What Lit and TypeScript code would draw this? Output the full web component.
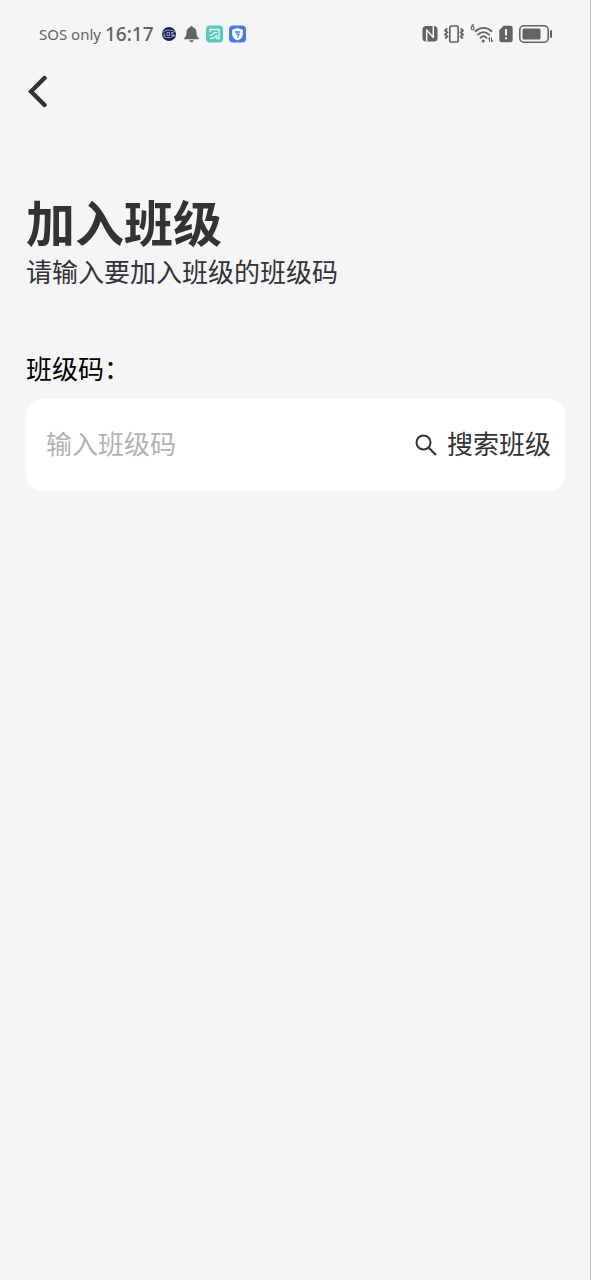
import { LitElement, html, css } from "lit";
import { customElement, state } from "lit/decorators.js";

@customElement("status-bar")
class StatusBar extends LitElement {
  static styles = css`
    :host {
      display: block;
    }
    .bar {
      display: flex;
      justify-content: space-between;
      align-items: center;
      height: 67px;
      padding: 0 38px 0 39px;
      box-sizing: border-box;
      color: #636365;
    }
    .side {
      display: flex;
      align-items: center;
      gap: 6px;
    }
    .carrier {
      font: 15px/20px "Noto Sans", sans-serif;
      margin-right: -2px;
    }
    .time {
      font: 500 19px/24px "Noto Sans", sans-serif;
      margin-right: 1px;
    }
    svg {
      display: block;
      flex: none;
    }
  `;

  render() {
    return html`
      <div class="bar">
        <div class="side">
          <span class="carrier">SOS only</span>
          <span class="time">16:17</span>
          <svg width="16" height="18" viewBox="0 0 16 18">
            <circle cx="8" cy="9" r="7" fill="#15245a" />
            <path d="M1.500 7.500C4 4.500 11 4.500 14.500 7M2 11C5 13.500 11 13 14.500 10" fill="none" stroke="#98a2bd" stroke-width="1" />
            <path d="M3 7.500v3h1.500M6 7.500h2.500v3H6zM12.500 7.500h-2v1.500h2v1.500h-2.500" fill="none" stroke="#b5bdcc" stroke-width="0.800" />
          </svg>
          <svg width="17" height="18" viewBox="0 0 17 18">
            <path d="M8.500 1a1.300 1.300 0 0 1 1.300 1.300C12.500 3 13.500 5 13.500 7.500c0 3 .7 4.200 2.200 5.500v1.300H1.300V13c1.500-1.300 2.200-2.500 2.200-5.500C3.500 5 4.500 3 7.200 2.300A1.300 1.300 0 0 1 8.500 1zM6.300 15.300h4.400a2.200 2 0 0 1-4.400 0z" fill="#636365" />
          </svg>
          <svg width="17" height="18" viewBox="0 0 17 18">
            <rect y="0.500" width="17" height="17" rx="4" fill="#59c9ba" />
            <path d="M4 7V4.500h9V13.500h-2.500M4 13.500c3 .2 5-1 6.500-3.500M4 10.500c2 0 3-1 4-2.800h3M10.500 10v3" fill="none" stroke="#e4faf6" stroke-width="1.300" />
          </svg>
          <svg width="17" height="18" viewBox="0 0 17 18">
            <rect y="0.500" width="17" height="17" rx="4" fill="#4a7be0" />
            <path d="M8.500 3 13.800 4.800v4.400c0 2.800-2.300 5-5.300 6.300-3-1.300-5.300-3.500-5.300-6.300V4.800z" fill="#fff" />
            <path d="M5.800 7h5.400M7 9.200h3L8.500 12.500" fill="none" stroke="#4a7be0" stroke-width="1.300" />
          </svg>
        </div>
        <div class="side">
          <svg width="16" height="18" viewBox="0 0 16 18">
            <rect x="0.500" y="1" width="15" height="15.500" rx="3.500" fill="#636365" />
            <path d="M4.700 16.500V5L11.300 12.500V1" fill="none" stroke="#f5f5f8" stroke-width="1.500" stroke-linejoin="round" />
          </svg>
          <svg width="20" height="20" viewBox="0 0 20 20">
            <rect x="5.800" y="2" width="8.400" height="16" rx="1.800" fill="none" stroke="#636365" stroke-width="1.700" />
            <path d="M3.200 4.500 1.200 6.500 3.200 8.500 1.200 10.500 3.200 12.500 1.200 14.500M16.800 4.500l2 2-2 2 2 2-2 2 2 2" fill="none" stroke="#636365" stroke-width="1.900" />
          </svg>
          <svg width="23" height="20" viewBox="0 0 23 20">
            <path d="M4 .9C2 .5 1.200 2.500 1.200 4.500a1.500 1.500 0 1 0 1-1.700" fill="none" stroke="#636365" stroke-width="1.200" />
            <path d="M5.500 7.200C10 2.800 17 2.800 21.500 7.200M8 10.600c3.300-3.100 7.700-3.100 11 0M10.500 13.700c1.900-1.700 4.100-1.700 6 0" fill="none" stroke="#636365" stroke-width="1.900" stroke-linecap="round" />
            <circle cx="13.200" cy="17" r="1.600" fill="#636365" />
            <path d="M19.500 18v-4.500l-1.500 2M21.500 13.500V18l1.500-2" fill="none" stroke="#636365" stroke-width="1" />
          </svg>
          <svg width="14" height="18" viewBox="0 0 14 18">
            <path d="M4.500 .8H11.500A2.200 2.200 0 0 1 13.700 3V15a2.200 2.200 0 0 1-2.200 2.200h-9A2.200 2.200 0 0 1 .3 15V5z" fill="#636365" />
            <path d="M7 4v6.500M7 12.300v2" stroke="#f5f5f8" stroke-width="2" />
          </svg>
          <svg width="33" height="18" viewBox="0 0 33 18">
            <rect x="0.800" y="0.800" width="28.400" height="16.400" rx="4" fill="none" stroke="#636365" stroke-width="1.600" />
            <rect x="3.500" y="3.500" width="18" height="11" rx="1.500" fill="#636365" />
            <rect x="31" y="5" width="2" height="8" rx="1" fill="#636365" />
          </svg>
        </div>
      </div>
    `;
  }
}

@customElement("app-root")
class AppRoot extends LitElement {
  @state() private code = "";

  static styles = css`
    :host {
      display: block;
      min-height: 100vh;
      box-sizing: border-box;
      background: #f5f5f8;
      border-right: 1px solid #c2c2c6;
      color: #333335;
      font: 26px/36px "Liberation Sans", "Noto Sans CJK SC", sans-serif;
    }
    .back {
      display: block;
      margin: 0 0 0 20px;
      padding: 7px 8px;
      border: 0;
      background: none;
      color: inherit;
    }
    svg {
      display: block;
      flex: none;
    }
    main {
      padding: 80px 25px 0 26px;
    }
    h1 {
      margin: 0;
      font-size: 49px;
      line-height: 60px;
      font-weight: 700;
    }
    p {
      margin: 0 0 61px;
    }
    label {
      display: block;
      margin-bottom: 11px;
      color: #000;
    }
    .field {
      display: flex;
      align-items: center;
      height: 92px;
      padding: 0 14px 0 20px;
      border-radius: 16px;
      background: #fff;
      box-sizing: border-box;
    }
    input {
      flex: 1;
      min-width: 0;
      padding: 0;
      border: 0;
      outline: 0;
      background: none;
      font: inherit;
      color: inherit;
    }
    input::placeholder {
      color: #b2b2b2;
      opacity: 1;
    }
    .search {
      display: flex;
      align-items: center;
      gap: 10px;
      padding: 0;
      border: 0;
      background: none;
      font: inherit;
      color: inherit;
    }
  `;

  private onInput(e: Event) {
    this.code = (e.target as HTMLInputElement).value;
  }

  render() {
    return html`
      <status-bar></status-bar>
      <button class="back" aria-label="返回">
        <svg width="20" height="34" viewBox="0 0 20 34">
          <path d="M16.500 4 3 17.500 16.500 31" fill="none" stroke="currentColor" stroke-width="4.400" stroke-linecap="round" />
        </svg>
      </button>
      <main>
        <h1>加入班级</h1>
        <p>请输入要加入班级的班级码</p>
        <label for="code">班级码：</label>
        <div class="field">
          <input id="code" type="text" placeholder="输入班级码" .value=${this.code} @input=${this.onInput} />
          <button class="search">
            <svg width="22" height="22" viewBox="0 0 22 22">
              <circle cx="8.500" cy="8.500" r="7" fill="none" stroke="currentColor" stroke-width="2" />
              <path d="M13.500 13.500 21 21" stroke="currentColor" stroke-width="2.200" />
            </svg>
            搜索班级
          </button>
        </div>
      </main>
    `;
  }
}
